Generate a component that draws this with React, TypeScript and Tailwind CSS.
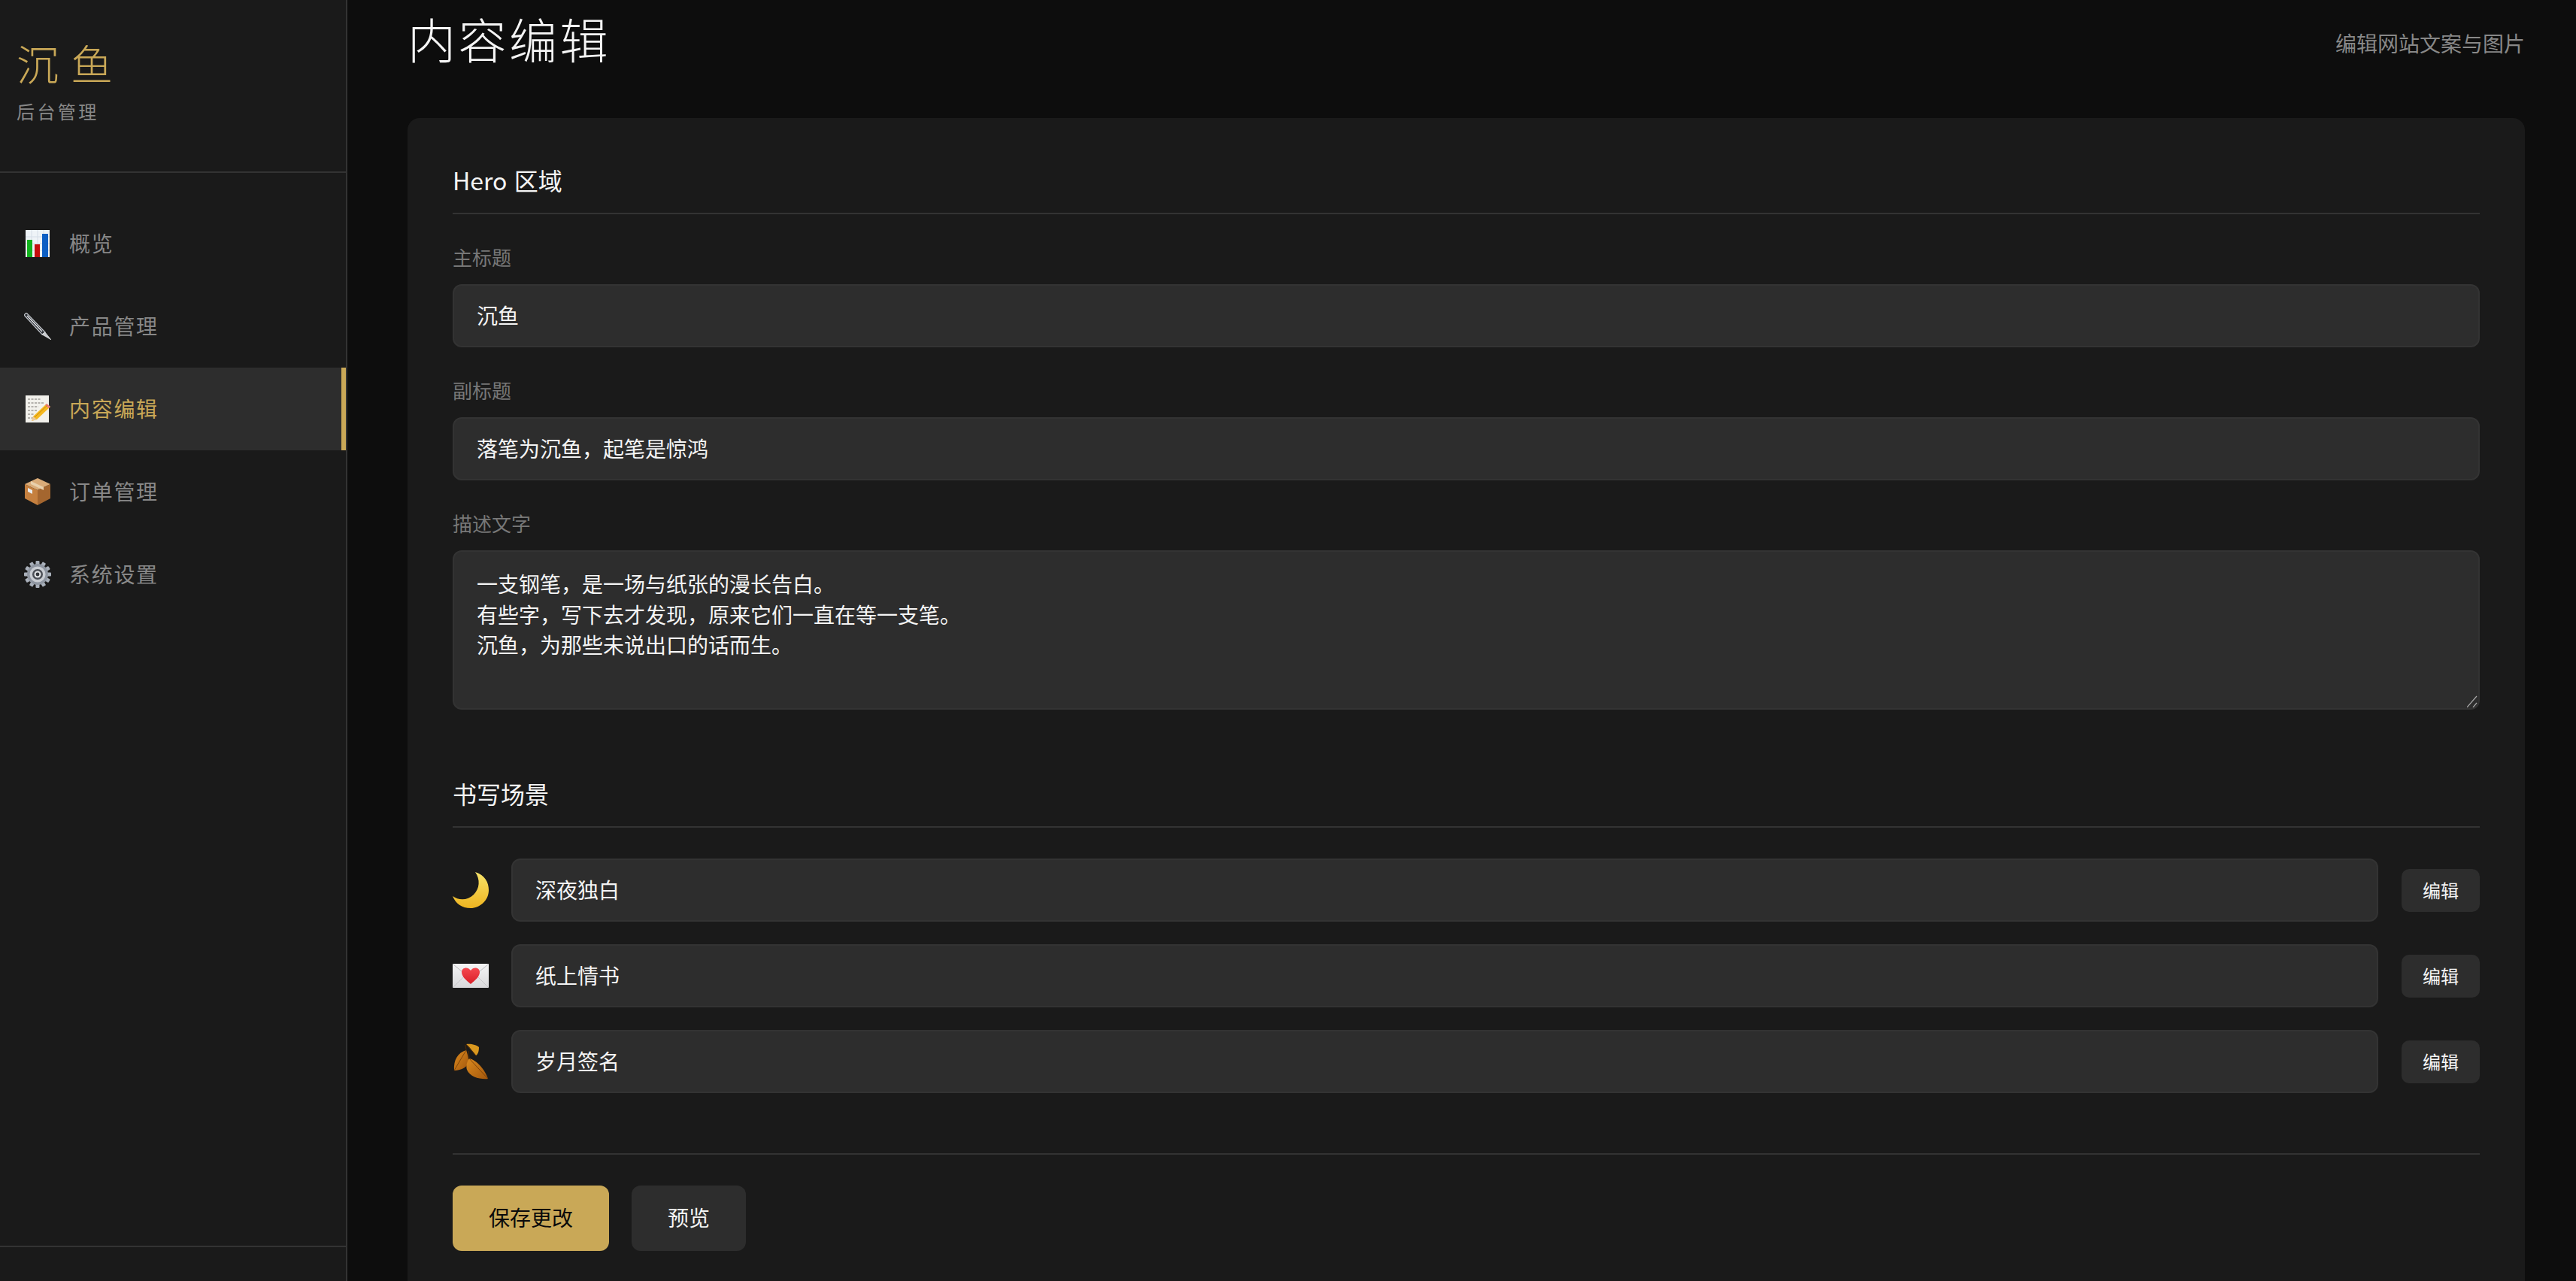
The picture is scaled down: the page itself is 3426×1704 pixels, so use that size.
import React from 'react';

const ChartIcon = () => (
  <svg viewBox="0 0 36 36" className="w-[36px] h-[36px]">
    <rect x="2" y="0" width="32" height="36" fill="#eef3f7" />
    <path d="M2 9h32M2 18h32M2 27h32M10 0v36M18 0v36M26 0v36" stroke="#d5dde6" strokeWidth="1" />
    <rect x="4" y="13" width="7" height="23" fill="#12b31e" />
    <rect x="14" y="19" width="7" height="17" fill="#c40d0d" />
    <rect x="24" y="5" width="8" height="31" fill="#0d5fc4" />
  </svg>
);

const PenIcon = () => (
  <svg viewBox="0 0 36 36" className="w-[36px] h-[36px]">
    <path d="M0 3 L3 0 L28 26 L24 29 Z" fill="#2a2d33" stroke="#c3c7cc" strokeWidth="1.2" />
    <path d="M4 4 L24 25" stroke="#f0f2f4" strokeWidth="1.2" />
    <path d="M24 29 L28 26 L36 36 Z" fill="#c9ccd0" stroke="#f0f0f0" strokeWidth="0.6" />
  </svg>
);

const MemoIcon = () => (
  <svg viewBox="0 0 36 36" className="w-[36px] h-[36px]">
    <rect x="2" y="0" width="31" height="36" fill="#f2f1ec" />
    <path d="M5 5h18M5 10h22M5 15h14M5 20h12M5 25h8M5 30h7" stroke="#77756f" strokeWidth="1.2" strokeDasharray="3 1.5" />
    <path d="M30 11 L35 15 L17 32 L10 34 L12 28 Z" fill="#f5b81f" />
    <path d="M30 11 L35 15 L33 17 L28 13 Z" fill="#ea7b83" />
    <path d="M12 28 L10 34 L17 32 Z" fill="#e9c9a0" />
    <path d="M14 29 L31 13" stroke="#c98a10" strokeWidth="1" />
  </svg>
);

const BoxIcon = () => (
  <svg viewBox="0 0 36 36" className="w-[36px] h-[36px]">
    <path d="M18 0 L35 8 L18 16 L1 8 Z" fill="#d9ab78" />
    <path d="M1 8 L18 16 L18 36 L1 27 Z" fill="#c5803f" />
    <path d="M35 8 L18 16 L18 36 L35 27 Z" fill="#a4662f" />
    <path d="M9 4 L26 12 L26 16 L9 8 Z" fill="#e8d0ac" />
    <path d="M5 13 L11 16 L11 21 L5 18 Z" fill="#e8ecef" />
  </svg>
);

const GearIcon = () => (
  <svg viewBox="0 0 36 36" className="w-[36px] h-[36px]">
    <g fill="#a9b0ba">
      {[0, 30, 60, 90, 120, 150, 180, 210, 240, 270, 300, 330].map((a) => (
        <rect key={a} x="15.5" y="0" width="5" height="7" rx="1" transform={`rotate(${a} 18 18)`} />
      ))}
    </g>
    <circle cx="18" cy="18" r="14" fill="#8f96a1" />
    <circle cx="18" cy="18" r="10.5" fill="#c8ccd2" />
    <circle cx="18" cy="18" r="7" fill="#4b4f56" />
    <circle cx="18" cy="18" r="4.5" fill="#e3e5e8" />
    <circle cx="18" cy="18" r="2.4" fill="#33363b" />
  </svg>
);

const MoonIcon = () => (
  <svg viewBox="0 0 48 48" className="w-[48px] h-[48px]">
    <defs>
      <linearGradient id="moonFill" x1="0" y1="0" x2="0" y2="1">
        <stop offset="0" stopColor="#f7e36a" />
        <stop offset="1" stopColor="#eeb420" />
      </linearGradient>
    </defs>
    <path d="M30 0 C43 4 48 14 48 24 C48 38 36 48 24 48 C12 48 4 42 0 32 C8 38 20 38 28 30 C36 22 37 10 30 0 Z" fill="url(#moonFill)" />
  </svg>
);

const LetterIcon = () => (
  <svg viewBox="0 0 48 32" className="w-[48px] h-[32px]">
    <defs>
      <linearGradient id="letterFill" x1="0" y1="0" x2="0" y2="1">
        <stop offset="0" stopColor="#f4f4f5" />
        <stop offset="1" stopColor="#d9d9db" />
      </linearGradient>
      <linearGradient id="heartFill" x1="0" y1="0" x2="0" y2="1">
        <stop offset="0" stopColor="#f5484f" />
        <stop offset="1" stopColor="#d91f28" />
      </linearGradient>
    </defs>
    <rect x="0" y="0" width="48" height="32" rx="1" fill="url(#letterFill)" />
    <path d="M1 1 L24 20 L47 1" fill="none" stroke="#bdbdc0" strokeWidth="1" />
    <path d="M1 31 L17 15M47 31 L31 15" stroke="#c6c6c9" strokeWidth="1" />
    <path d="M24 27 C18 22 12 17 12 11 C12 5 20 3 24 9 C28 3 36 5 36 11 C36 17 30 22 24 27 Z" fill="url(#heartFill)" />
  </svg>
);

const LeavesIcon = () => (
  <svg viewBox="0 0 48 48" className="w-[48px] h-[48px]">
    <defs>
      <linearGradient id="leafFill" x1="0" y1="0" x2="1" y2="1">
        <stop offset="0" stopColor="#dc8a1e" />
        <stop offset="1" stopColor="#a3570c" />
      </linearGradient>
    </defs>
    <path d="M18 9 C7 12 1 22 2 36 C12 36 21 31 21 23 C21 17 19 12 18 9 Z" fill="url(#leafFill)" />
    <path d="M22 20 C32 22 43 35 47 47 C37 48 23 45 19 35 C17 29 20 23 22 20 Z" fill="url(#leafFill)" />
    <path d="M18 1 C24 0 32 2 35 5 C35 10 34 14 31 16 C27 11 23 5 18 1 Z" fill="#d9981f" />
    <path d="M2 36 L18 9M22 20 L47 47M18 1 L31 16" stroke="#6f3a08" strokeWidth="0.8" fill="none" />
    <path d="M18 9 L17 2M22 20 L21 10" stroke="#4a2806" strokeWidth="1.2" fill="none" />
  </svg>
);

const navItems = [
  { label: '概览', icon: <ChartIcon /> },
  { label: '产品管理', icon: <PenIcon /> },
  { label: '内容编辑', icon: <MemoIcon />, active: true },
  { label: '订单管理', icon: <BoxIcon /> },
  { label: '系统设置', icon: <GearIcon /> },
];

const scenes = [
  { title: '深夜独白', icon: <MoonIcon /> },
  { title: '纸上情书', icon: <LetterIcon /> },
  { title: '岁月签名', icon: <LeavesIcon /> },
];

const inputClass =
  'w-full h-[84px] px-[30px] pb-[3px] bg-[#2d2d2d] border-2 border-[#333333] rounded-[12px] text-[28px] text-[#f5f5f5] outline-none';

const labelClass = 'block h-[40px] mb-[14px] text-[26px] leading-[36px] text-[#777777]';

const Field: React.FC<{ label: string; value: string }> = ({ label, value }) => (
  <div className="mb-[39px]">
    <label className={labelClass}>{label}</label>
    <input readOnly value={value} className={inputClass} />
  </div>
);

const SectionTitle: React.FC<{ children: React.ReactNode }> = ({ children }) => (
  <h3 className="h-[68px] mb-[39px] border-b-2 border-[#333333] text-[32px] leading-[44px] [word-spacing:2px] text-[#f5f5f5]">{children}</h3>
);

export default function App() {
  return (
    <div
      className="flex h-[1704px] overflow-hidden bg-[#0d0d0d]"
      style={{ fontFamily: '"Noto Sans CJK SC", "Noto Sans", sans-serif' }}
    >
      <aside className="flex flex-col w-[462px] shrink-0 bg-[#1a1a1a] border-r-2 border-[#333333]">
        <div className="h-[230px] pl-[22px] pt-[44px] border-b-2 border-[#333333]">
          <div className="text-[56px] leading-[78px] font-light tracking-[16px] text-[#c9a857]">沉鱼</div>
          <div className="mt-[8px] text-[24px] leading-[36px] tracking-[3.4px] text-[#888888]">后台管理</div>
        </div>
        <nav className="flex-1 pt-[39px]">
          {navItems.map((item) => (
            <div
              key={item.label}
              className={`flex items-center h-[110px] pl-[32px] gap-[24px] text-[28px] tracking-[1.7px] ${
                item.active
                  ? 'bg-[#2d2d2d] text-[#c9a857] border-r-[6px] border-[#c9a857]'
                  : 'text-[#888888]'
              }`}
            >
              {item.icon}
              <span className="pb-[2px]">{item.label}</span>
            </div>
          ))}
        </nav>
        <div className="h-[47px] border-t-2 border-[#333333]" />
      </aside>

      <main className="flex-1 min-w-0 pl-[80px] pr-[68px]">
        <header className="flex justify-between h-[157px]">
          <h1 className="mt-[2px] text-[64px] leading-[96px] font-light tracking-[3.5px] text-[#f5f5f5]">内容编辑</h1>
          <span className="mt-[36px] text-[28px] leading-[42px] text-[#888888]">编辑网站文案与图片</span>
        </header>

        <section className="px-[60px] pt-[60px] pb-[60px] bg-[#1a1a1a] rounded-[16px]">
          <SectionTitle>Hero 区域</SectionTitle>
          <Field label="主标题" value="沉鱼" />
          <Field label="副标题" value="落笔为沉鱼，起笔是惊鸿" />
          <div className="mb-[89px]">
            <label className={labelClass}>描述文字</label>
            <div className="relative">
              <textarea
                readOnly
                value={'一支钢笔，是一场与纸张的漫长告白。\n有些字，写下去才发现，原来它们一直在等一支笔。\n沉鱼，为那些未说出口的话而生。'}
                className="block w-full h-[212px] px-[30px] pt-[22px] bg-[#2d2d2d] border-2 border-[#333333] rounded-[12px] text-[28px] leading-[40.5px] text-[#f5f5f5] outline-none resize-none"
              />
              <svg viewBox="0 0 14 16" className="absolute right-[3px] bottom-[3px] w-[14px] h-[16px]">
                <path d="M0 16 L13 1M8 16 L13 10" stroke="#a8a8a8" strokeWidth="1.2" fill="none" />
              </svg>
            </div>
          </div>

          <SectionTitle>书写场景</SectionTitle>
          <div className="flex flex-col gap-[30px] pt-[2px]">
            {scenes.map((scene) => (
              <div key={scene.title} className="flex items-center">
                <div className="flex items-center justify-center w-[48px] shrink-0">{scene.icon}</div>
                <div className="flex-1 ml-[30px] mr-[31px]">
                  <input readOnly value={scene.title} className={inputClass} />
                </div>
                <button className="w-[104px] h-[57px] pb-[1px] shrink-0 bg-[#2d2d2d] rounded-[10px] text-[24px] text-[#f5f5f5]">
                  编辑
                </button>
              </div>
            ))}
          </div>

          <div className="flex gap-[30px] mt-[80px] pt-[41px] border-t-2 border-[#333333]">
            <button className="w-[208px] h-[87px] pb-[3px] bg-[#c9a857] rounded-[12px] text-[28px] text-[#0a0a0a]">保存更改</button>
            <button className="w-[152px] h-[87px] pb-[3px] bg-[#2d2d2d] rounded-[12px] text-[28px] text-[#f5f5f5]">预览</button>
          </div>
        </section>
      </main>
    </div>
  );
}
